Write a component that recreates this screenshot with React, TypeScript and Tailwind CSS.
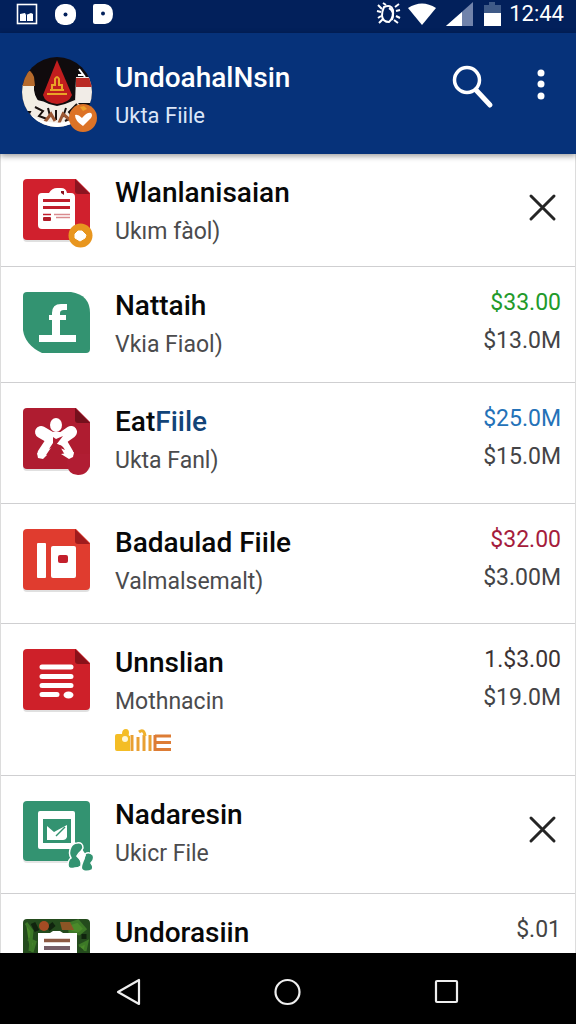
import React from 'react';

type Entry = {
  id: number;
  title: React.ReactNode;
  subtitle?: string;
  icon: React.ReactNode;
  rowClass: string;
  amount?: string;
  amountClass?: string;
  total?: string;
  dismissible?: boolean;
  chart?: boolean;
};

const FileShape = ({ fill, fold }: { fill: string; fold: string }) => (
  <>
    <path d="M4 2H53L67 16V59q0 4-4 4H4q-4 0-4-4V5q0-4 4-3Z" fill="#000" opacity="0.12" />
    <path d="M4 0H53L67 14V57q0 4-4 4H4q-4 0-4-4V4q0-4 4-4Z" fill={fill} />
    <path d="M52 0L67 15H55q-3 0-3-3Z" fill={fold} />
  </>
);

const IconBox = ({ children }: { children: React.ReactNode }) => (
  <svg viewBox="0 0 72 72" className="w-[72px] h-[72px] shrink-0 mt-[6px]" aria-hidden="true">
    {children}
  </svg>
);

const ClipboardIcon = () => (
  <IconBox>
    <FileShape fill="#d0202d" fold="#8c1420" />
    <path d="M19 14h7q3-5 8-5h4q5 0 6 5h4q4 0 4 4v28q0 4-4 4H19q-4 0-4-4V18q0-4 4-4Z" fill="#fff" />
    <path d="M38 12h3v4l-3-2Z" fill="#8c1420" />
    <path d="M20 21.500H47M20 28.500H47" stroke="#c01f2c" strokeWidth="3" />
    <path d="M20 35.500H28" stroke="#c01f2c" strokeWidth="1.500" />
    <path d="M31 35.500H47M33 38.500H47" stroke="#d98a8e" strokeWidth="1.500" />
    <rect x="20" y="38" width="8" height="4" rx="1" fill="#b01c28" />
    <circle cx="57.500" cy="56.500" r="12" fill="#e8961f" />
    <path d="M55 52h4l4 4-1 3-5 3-5-3v-4Z" fill="#fff" stroke="#fff" strokeLinejoin="round" />
  </IconBox>
);

const LetterIcon = () => (
  <IconBox>
    <path d="M4 0H48Q67 3 67 21V57q0 4-4 4H19Q2 53 0 38V4q0-4 4-4Z" fill="#339371" />
    <path
      d="M29 43V28h-3v-5h3v-2q0-9 9-9h6v6h-3q-4 0-4 3v2h6v5h-6v15H53v7H16v-7Z"
      fill="#fff"
    />
  </IconBox>
);

const StarIcon = () => (
  <IconBox>
    <FileShape fill="#af1c30" fold="#74101c" />
    <path d="M44 46h23v9q-1 12-12 12-10 0-11-11Z" fill="#b11d33" />
    <ellipse cx="33" cy="17" rx="6" ry="7" fill="#fff" />
    <path d="M18 24L30 31M48 24L38 31" stroke="#fff" strokeWidth="12" strokeLinecap="round" />
    <path d="M27 33L19 45M39 33L46 45" stroke="#fff" strokeWidth="9" strokeLinecap="round" />
    <path d="M26 24H42L44 36H24Z" fill="#fff" />
    <path d="M14 45l1 5 5 1 4-4ZM38 46l8 5 4-2 1-5Z" fill="#fff" />
    <path d="M30 29l3 2 7-3-7 9-7 4 4-6Z" fill="#b01c30" />
    <path d="M31 38q7-4 11 4-5-3-11-1Z" fill="#b01c30" />
  </IconBox>
);

const SlideIcon = () => (
  <IconBox>
    <FileShape fill="#e03c2f" fold="#a01b1d" />
    <rect x="14" y="14" width="9" height="35" rx="1" fill="#fff" />
    <rect x="28" y="17" width="25" height="32" rx="2" fill="#fff" />
    <rect x="35" y="26" width="10" height="8" rx="2" fill="#c3202c" />
  </IconBox>
);

const NoteIcon = () => (
  <IconBox>
    <FileShape fill="#ce2029" fold="#8a1119" />
    <path d="M19 18H48M19 27.500H48M19 36.500H48M19 45.500H34" stroke="#fff" strokeWidth="5" strokeLinecap="round" />
    <ellipse cx="45.500" cy="46" rx="5" ry="3.500" fill="#fff" />
  </IconBox>
);

const CheckIcon = () => (
  <IconBox>
    <rect y="1" width="67" height="61" rx="4" fill="#000" opacity="0.1" />
    <rect width="67" height="60" rx="4" fill="#339371" />
    <path fillRule="evenodd" d="M17 10H50q2 0 2 2V46q0 2-2 2H17q-2 0-2-2V12q0-2 2-2ZM20 18V42H48V18Z" fill="#fff" />
    <path d="M24 25l7 6 13-7v12q-1 3-4 3H24Z" fill="#fff" />
    <path d="M33 35l9-9" stroke="#339371" strokeWidth="1.500" />
    <path
      d="M54 42q6-1 6 5-1 3-4 5l-2 3q5 3 4 10-3 2-6 2-7 2-7-3 0-5 3-7-3-5 0-11 2-4 6-4Z"
      fill="#339371"
      stroke="#fff"
      strokeWidth="1.500"
    />
    <path
      d="M62 53q4-3 8 1 2 4-2 8 3 4 1 7-4 2-8 1-4-1-2-7 1-3 2-5Z"
      fill="#339371"
      stroke="#fff"
      strokeWidth="1.500"
    />
    <path d="M59 48l4 6-4 8-5-6Z" fill="#fff" />
  </IconBox>
);

const PhotoIcon = () => (
  <IconBox>
    <path d="M4 0H63q4 0 4 4V61H0V4q0-4 4-4Z" fill="#244b1d" />
    <path d="M3 4l6 8-2 20M46 5l9-3 7 8-6 5-9-2ZM5 20l7 3-3 10M56 27l8-4-2 9" fill="#4a8a2a" stroke="#3d7927" strokeWidth="3" />
    <path d="M10 4l4 8M61 15v5M31 5l-6 5" stroke="#10240e" strokeWidth="5" />
    <circle cx="21" cy="7" r="5" fill="#a54c24" />
    <path d="M37 3h10l4 8H39Z" fill="#8b5525" />
    <path d="M15 14H27l3-2h7l3 2H54V61H15Z" fill="#fff" />
    <path d="M21 21.500H47" stroke="#8d5a43" strokeWidth="3.500" />
    <path d="M21 29H47" stroke="#765f68" strokeWidth="4" />
  </IconBox>
);

const MiniChart = () => (
  <svg viewBox="0 0 56 24" className="w-14 h-6 mt-[7px]" aria-hidden="true">
    <path d="M0 8q0-2 2-2h5q0-5 4-5 3 0 3 4-1 3 1 3V23H2q-2 0-2-2Z" fill="#f4bd25" />
    <circle cx="10" cy="11" r="3" fill="#fff7d6" />
    <path d="M17 7V23M23 9V23M29 7V23M35 7V23" stroke="#e9a032" strokeWidth="3" />
    <path d="M24 4q5-4 6 4" fill="none" stroke="#efb12d" strokeWidth="3" />
    <path d="M40 8H56M40 14.500H56M40 21.500H56M40 7V23" stroke="#dd7c35" strokeWidth="3" />
  </svg>
);

const Avatar = () => (
  <svg viewBox="0 0 78 78" className="w-[78px] h-[78px] shrink-0" role="img" aria-label="Profile">
    <clipPath id="avatar">
      <circle cx="35" cy="35" r="35" />
    </clipPath>
    <g clipPath="url(#avatar)">
      <rect width="78" height="78" fill="#100b0d" />
      <path d="M0 28h12q-1 10 6 18l-6 8L0 54Z" fill="#f4efe4" />
      <path d="M0 14q8-4 12 6l1 9H0Z" fill="#b66a2c" />
      <path d="M54 20h16v26H53Z" fill="#f1ece7" />
      <path d="M54 21h16v9H54Z" fill="#b92a24" />
      <path d="M57 12l6 8M56 18h5" stroke="#fff" strokeWidth="2" />
      <path d="M35 3L50 38q-3 8-15 9-12-1-14-9Z" fill="#c11d1e" />
      <path d="M25 37H45M28 33H42M30 33v-5h3v-6q2-4 4 0v6h3v5" fill="none" stroke="#e9a427" strokeWidth="2" />
      <path d="M15 43q7 1 12 4l8 2 8-2 10-4 9 9-14 19H20L8 57Z" fill="#f3ede5" />
      <path d="M13 50l8 4-4 5 8 3M26 51l2 8M34 53v10M44 51l-3 9M55 47l-8 8 4 5-8 4" fill="none" stroke="#1b1310" strokeWidth="2" />
      <path d="M22 66l7-9 4 7M37 66l4-9 7 6" fill="none" stroke="#9b5733" strokeWidth="3" />
      <path d="M4 54Q20 70 50 64V74H4Z" fill="#fff" />
    </g>
    <circle cx="61" cy="61" r="14" fill="#dc7327" />
    <path d="M58 50l4-1 3 3-4 2Z" fill="#eda129" />
    <path d="M53 58q3-1 7 3 5-6 9-5 2 2 0 5l-8 8q-8-5-8-11Z" fill="#fff" />
  </svg>
);

const entries: Entry[] = [
  {
    id: 1,
    title: 'Wlanlanisaian',
    subtitle: 'Ukım fàol)',
    icon: <ClipboardIcon />,
    rowClass: 'min-h-[113px]',
    dismissible: true,
  },
  {
    id: 2,
    title: 'Nattaih',
    subtitle: 'Vkia Fiaol)',
    icon: <LetterIcon />,
    rowClass: 'min-h-[116px]',
    amount: '$33.00',
    amountClass: 'text-[#229a2b]',
    total: '$13.0M',
  },
  {
    id: 3,
    title: (
      <>
        Eat<span className="text-[#124478]">Fiile</span>
      </>
    ),
    subtitle: 'Ukta Fanl)',
    icon: <StarIcon />,
    rowClass: 'min-h-[121px]',
    amount: '$25.0M',
    amountClass: 'text-[#2472b8]',
    total: '$15.0M',
  },
  {
    id: 4,
    title: 'Badaulad Fiile',
    subtitle: 'Valmalsemalt)',
    icon: <SlideIcon />,
    rowClass: 'min-h-[120px]',
    amount: '$32.00',
    amountClass: 'text-[#a51c3c]',
    total: '$3.00M',
  },
  {
    id: 5,
    title: 'Unnslian',
    subtitle: 'Mothnacin',
    icon: <NoteIcon />,
    rowClass: 'min-h-[152px]',
    amount: '1.$3.00',
    amountClass: 'text-[#3c3234]',
    total: '$19.0M',
    chart: true,
  },
  {
    id: 6,
    title: 'Nadaresin',
    subtitle: 'Ukicr File',
    icon: <CheckIcon />,
    rowClass: 'min-h-[118px]',
    dismissible: true,
  },
  {
    id: 7,
    title: 'Undorasiin',
    icon: <PhotoIcon />,
    rowClass: 'min-h-[120px]',
    amount: '$.01',
    amountClass: 'text-[#444444]',
  },
];

const StatusBar = () => (
  <div className="flex shrink-0 items-center justify-between h-[33px] pl-4 pr-3 pb-[6px] bg-[#02205b] text-white">
    <div className="flex items-center gap-4">
      <svg viewBox="0 0 22 22" className="w-[22px] h-[22px]" aria-hidden="true">
        <rect x="1.500" y="1.500" width="19" height="19" fill="none" stroke="#fff" strokeWidth="1.600" />
        <path d="M4 11l5-1 1 2 5-2 2 1v7H4Z" fill="#fff" />
        <path d="M10.500 12v6" stroke="#02205b" />
      </svg>
      <svg viewBox="0 0 22 22" className="w-[22px] h-[22px]" aria-hidden="true">
        <rect x="1" y="1" width="21" height="21" rx="9" fill="#fff" />
        <circle cx="11.500" cy="11.500" r="2" fill="#02205b" />
      </svg>
      <svg viewBox="0 0 22 22" className="w-[22px] h-[22px]" aria-hidden="true">
        <path d="M3 1h10q8 1 8 10t-8 10H3q-2 0-2-2V3q0-2 2-2Z" fill="#fff" />
        <circle cx="11" cy="10.500" r="2" fill="#02205b" />
      </svg>
    </div>
    <div className="flex items-center gap-[10px]">
      <svg viewBox="0 0 26 24" className="w-[26px] h-6 -mr-1" fill="none" stroke="#fff" strokeWidth="2" aria-hidden="true">
        <path d="M8 5q7-3 9 3 1 8-4 12-6 0-7-6 0-5 2-9Z" />
        <path d="M13 6q6 3 3 12M2 3l4 4M1 9l4 1M2 16l3-2M3 21l4-4M19 5l4-3M20 9l4-1M20 14l4 2M18 18l4 3M7 1l3 2" />
      </svg>
      <svg viewBox="0 0 28 24" className="w-7 h-6" aria-hidden="true">
        <path d="M0 6q14-9 28 0L14 23Z" fill="#fff" />
      </svg>
      <svg viewBox="0 0 27 24" className="w-[27px] h-6" aria-hidden="true">
        <path d="M27 0V24H0Z" fill="#7183ab" />
        <path d="M16 10V24H0Z" fill="#fff" />
      </svg>
      <svg viewBox="0 0 24 24" className="w-6 h-6" aria-hidden="true">
        <path d="M6 0h6v3h6v8H1V3h5Z" fill="#3f5a87" />
        <rect x="1" y="11" width="17" height="13" fill="#fff" />
      </svg>
      <span className="text-[22px] leading-6 -ml-2">12:44</span>
    </div>
  </div>
);

const Header = () => (
  <header className="flex shrink-0 items-start h-[121px] pl-[22px] pr-4 pt-6 bg-[#06327a] text-white shadow-[0_2px_6px_rgba(0,0,0,0.4)] z-10">
    <Avatar />
    <div className="flex-1 min-w-0 pl-[15px] pt-[2px]">
      <h1 className="text-[28px] leading-[38px] font-medium">UndoahalNsin</h1>
      <p className="text-[22px] leading-[38px] text-[#dce6f8]">Ukta Fiile</p>
    </div>
    <button type="button" aria-label="Search" className="mt-[7px]">
      <svg viewBox="0 0 44 46" className="w-11 h-[46px]" fill="none" stroke="#fff">
        <circle cx="17" cy="16" r="12.500" strokeWidth="3.500" />
        <path d="M26 26L40 41" strokeWidth="5" strokeLinecap="round" />
      </svg>
    </button>
    <button type="button" aria-label="More options" className="ml-7 mt-[7px]">
      <svg viewBox="0 0 38 40" className="w-[38px] h-10" fill="#fff">
        <circle cx="19" cy="9" r="3.500" />
        <circle cx="19" cy="20" r="3.500" />
        <circle cx="19" cy="32" r="3.500" />
      </svg>
    </button>
  </header>
);

const Row = ({ entry }: { entry: Entry }) => (
  <li className={`flex items-start gap-5 pl-[22px] pr-[14px] pt-[19px] border-b border-[#cfcfd1] ${entry.rowClass}`}>
    {entry.icon}
    <div className="flex-1 min-w-0">
      <h2 className="text-[28px] leading-10 font-medium text-[#080808]">{entry.title}</h2>
      {entry.subtitle && <p className="text-[23px] leading-[38px] text-[#4b4b4d]">{entry.subtitle}</p>}
      {entry.chart && <MiniChart />}
    </div>
    {entry.dismissible ? (
      <button type="button" aria-label="Dismiss" className="mt-[19px]">
        <svg viewBox="0 0 34 32" className="w-[34px] h-8" fill="none" stroke="#252525" strokeWidth="3" strokeLinecap="round">
          <path d="M4 4L27 27M27 4L4 27" />
        </svg>
      </button>
    ) : (
      <div className="-mt-[2px] text-[23px] leading-[38px] text-right">
        <p className={entry.amountClass}>{entry.amount}</p>
        <p className="text-[#444446]">{entry.total}</p>
      </div>
    )}
  </li>
);

const NavBar = () => (
  <nav className="flex shrink-0 items-center justify-around h-[71px] px-[50px] pt-[6px] bg-black">
    <button type="button" aria-label="Back">
      <svg viewBox="0 0 28 28" className="w-7 h-7" fill="none" stroke="#eee" strokeWidth="2.200" strokeLinejoin="round">
        <path d="M24 2V26L3 14Z" />
      </svg>
    </button>
    <button type="button" aria-label="Home">
      <svg viewBox="0 0 28 28" className="w-7 h-7" fill="none" stroke="#eee" strokeWidth="2.200">
        <circle cx="13.500" cy="14" r="12" />
      </svg>
    </button>
    <button type="button" aria-label="Recent apps">
      <svg viewBox="0 0 28 28" className="w-7 h-7" fill="none" stroke="#eee" strokeWidth="2.200">
        <rect x="3" y="3" width="21" height="21" rx="1" />
      </svg>
    </button>
  </nav>
);

export default function App() {
  return (
    <div className="flex flex-col h-screen overflow-hidden bg-white font-[Roboto,sans-serif]">
      <StatusBar />
      <Header />
      <main className="flex-1 min-h-0 overflow-hidden border-x border-[#dcdcdc]">
        <ul>
          {entries.map((entry) => (
            <Row key={entry.id} entry={entry} />
          ))}
        </ul>
      </main>
      <NavBar />
    </div>
  );
}
